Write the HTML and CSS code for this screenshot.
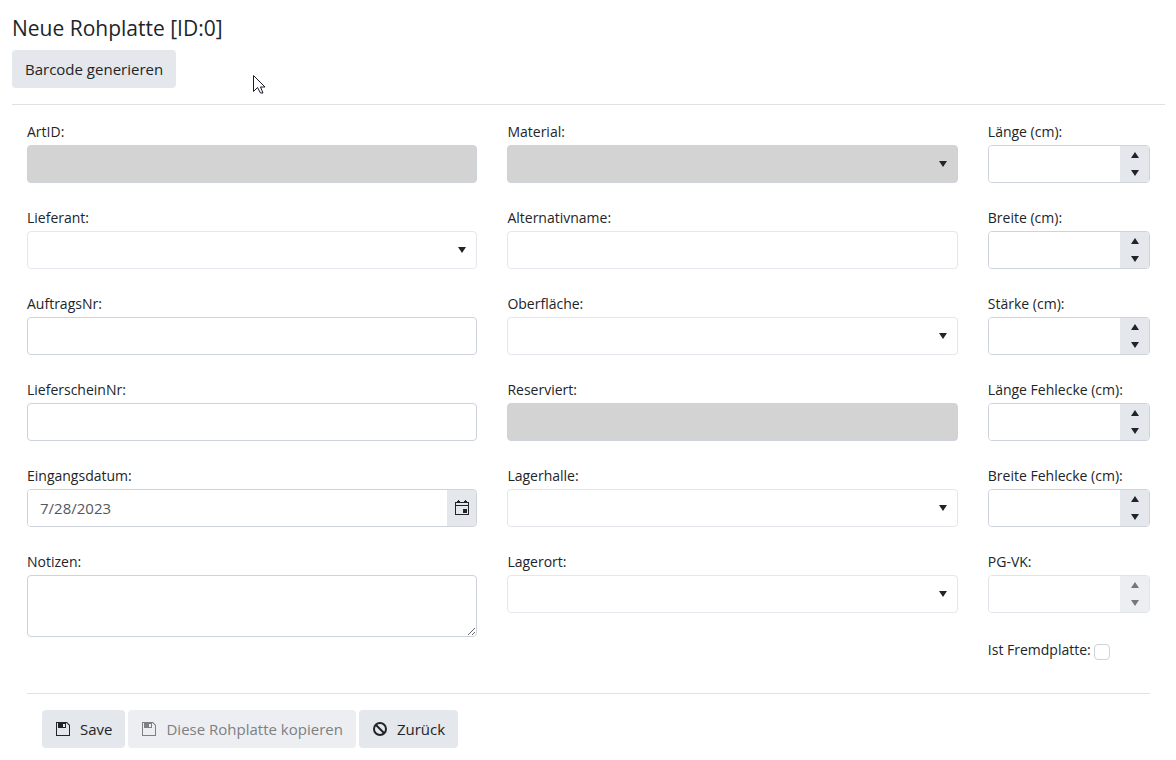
FILE: index.html
```html
<!DOCTYPE html>
<html lang="de">
<head>
<meta charset="utf-8">
<title>Neue Rohplatte</title>
<link rel="stylesheet" href="styles.css">
</head>
<body>
<svg class="symbols" aria-hidden="true">
  <symbol id="down" viewBox="0 0 8 6"><path d="M0 0h8L4 6z"/></symbol>
  <symbol id="up" viewBox="0 0 8 6"><path d="M0 6h8L4 0z"/></symbol>
  <symbol id="save" viewBox="0 0 16 16"><path fill-rule="evenodd" d="M1 1h11l3 3v11H1zM2 2v12h12V4.500L11.500 2H11v5H3V2zM8 3v3h2V3z"/></symbol>
  <symbol id="cancel" viewBox="0 0 16 16"><circle cx="8" cy="8" r="6" fill="none" stroke="currentColor" stroke-width="2"/><path d="M4 4l8 8" stroke="currentColor" stroke-width="2"/></symbol>
  <symbol id="calendar" viewBox="0 0 16 16"><path fill-rule="evenodd" d="M1 2h3V0h1v2h6V0h1v2h3v13H1zM2 3v2h12V3zM2 6v8h12V6zM9 9h4v4H9z"/><path d="M3 1h3v1H3zM10 1h3v1h-3z"/></symbol>
</svg>
<main class="page">
  <header class="page-header">
    <h1 class="title">Neue Rohplatte [ID:0]</h1>
    <button class="button" type="button">Barcode generieren</button>
  </header>
  <form class="form">
    <div class="columns">
      <div class="column">
        <div class="field"><label for="artid">ArtID:</label><input class="control filled" id="artid" type="text" disabled></div>
        <div class="field"><label for="lieferant">Lieferant:</label>
          <div class="picker"><select class="control light" id="lieferant"><option></option></select><svg class="arrow"><use href="#down"/></svg></div></div>
        <div class="field"><label for="auftrag">AuftragsNr:</label><input class="control" id="auftrag" type="text"></div>
        <div class="field"><label for="lieferschein">LieferscheinNr:</label><input class="control" id="lieferschein" type="text"></div>
        <div class="field"><label for="datum">Eingangsdatum:</label>
          <div class="group"><input class="group-input" id="datum" type="text" value="7/28/2023"><button class="calendar" type="button" aria-label="Kalender"><svg class="icon"><use href="#calendar"/></svg></button></div></div>
        <div class="field"><label for="notizen">Notizen:</label><textarea class="control notes" id="notizen"></textarea></div>
      </div>
      <div class="column">
        <div class="field"><label for="material">Material:</label>
          <div class="picker"><select class="control filled light" id="material" disabled><option></option></select><svg class="arrow"><use href="#down"/></svg></div></div>
        <div class="field"><label for="alternativ">Alternativname:</label><input class="control light" id="alternativ" type="text"></div>
        <div class="field"><label for="oberflaeche">Oberfläche:</label>
          <div class="picker"><select class="control light" id="oberflaeche"><option></option></select><svg class="arrow"><use href="#down"/></svg></div></div>
        <div class="field"><label for="reserviert">Reserviert:</label><input class="control filled" id="reserviert" type="text" disabled></div>
        <div class="field"><label for="halle">Lagerhalle:</label>
          <div class="picker"><select class="control light" id="halle"><option></option></select><svg class="arrow"><use href="#down"/></svg></div></div>
        <div class="field"><label for="ort">Lagerort:</label>
          <div class="picker"><select class="control light" id="ort"><option></option></select><svg class="arrow"><use href="#down"/></svg></div></div>
      </div>
      <div class="column">
        <div class="field"><label for="laenge">Länge (cm):</label>
          <div class="group"><input class="group-input" id="laenge" type="text" inputmode="decimal"><span class="spinner"><button type="button" aria-label="Erhöhen"><svg><use href="#up"/></svg></button><button type="button" aria-label="Verringern"><svg><use href="#down"/></svg></button></span></div></div>
        <div class="field"><label for="breite">Breite (cm):</label>
          <div class="group"><input class="group-input" id="breite" type="text" inputmode="decimal"><span class="spinner"><button type="button" aria-label="Erhöhen"><svg><use href="#up"/></svg></button><button type="button" aria-label="Verringern"><svg><use href="#down"/></svg></button></span></div></div>
        <div class="field"><label for="staerke">Stärke (cm):</label>
          <div class="group"><input class="group-input" id="staerke" type="text" inputmode="decimal"><span class="spinner"><button type="button" aria-label="Erhöhen"><svg><use href="#up"/></svg></button><button type="button" aria-label="Verringern"><svg><use href="#down"/></svg></button></span></div></div>
        <div class="field"><label for="laenge-ecke">Länge Fehlecke (cm):</label>
          <div class="group"><input class="group-input" id="laenge-ecke" type="text" inputmode="decimal"><span class="spinner"><button type="button" aria-label="Erhöhen"><svg><use href="#up"/></svg></button><button type="button" aria-label="Verringern"><svg><use href="#down"/></svg></button></span></div></div>
        <div class="field"><label for="breite-ecke">Breite Fehlecke (cm):</label>
          <div class="group"><input class="group-input" id="breite-ecke" type="text" inputmode="decimal"><span class="spinner"><button type="button" aria-label="Erhöhen"><svg><use href="#up"/></svg></button><button type="button" aria-label="Verringern"><svg><use href="#down"/></svg></button></span></div></div>
        <div class="field"><label for="pgvk">PG-VK:</label>
          <div class="group inactive"><input class="group-input" id="pgvk" type="text" disabled><span class="spinner"><button type="button" aria-label="Erhöhen" disabled><svg><use href="#up"/></svg></button><button type="button" aria-label="Verringern" disabled><svg><use href="#down"/></svg></button></span></div></div>
        <div class="check-field"><label for="fremd">Ist Fremdplatte:</label><input class="check" id="fremd" type="checkbox"></div>
      </div>
    </div>
    <footer class="actions">
      <button class="button" type="submit"><svg class="icon"><use href="#save"/></svg>Save</button>
      <button class="button" type="button" disabled><svg class="icon"><use href="#save"/></svg>Diese Rohplatte kopieren</button>
      <button class="button" type="button"><svg class="icon"><use href="#cancel"/></svg>Zurück</button>
    </footer>
  </form>
</main>
<svg class="pointer" viewBox="0 0 13 20" aria-hidden="true"><path d="M.5.5v16l4-4 3 5.500h2.500L7.500 12h4.500z" fill="#fff" stroke="#1b1b2b"/></svg>
</body>
</html>
```
FILE: styles.css
```css
* { box-sizing: border-box; }
body {
  margin: 0;
  background: #fff;
  color: #212529;
  font: 14px/18px "Open Sans", "Noto Sans", sans-serif;
}
button, input, select, textarea { font: inherit; color: inherit; margin: 0; }
svg { fill: currentColor; }
.symbols { display: none; }
.page { padding: 14px 11px 12px 12px; }
.page-header { padding-bottom: 16px; border-bottom: 1px solid #e0e1e2; }
.title { margin: 0 0 8px; font-size: 21px; line-height: 28px; font-weight: 400; }
.button {
  display: inline-flex;
  align-items: center;
  gap: 9px;
  height: 38px;
  padding: 0 13px;
  border: 0;
  border-radius: 4px;
  background: #e4e7eb;
  font-size: 15px;
  white-space: nowrap;
}
.button:disabled { background: #edeef2; color: #7d7f83; }
.icon { width: 16px; height: 16px; flex: none; }
.columns {
  display: grid;
  grid-template-columns: minmax(0, 5fr) minmax(0, 5fr) minmax(0, 2fr);
  padding: 18px 0 32px;
}
.column { display: flex; flex-direction: column; gap: 26px; padding: 0 15px; }
.field { display: flex; flex-direction: column; gap: 4px; }
.field label, .check-field label { white-space: nowrap; }
.control {
  display: block;
  width: 100%;
  height: 38px;
  padding: 0 12px;
  border: 1px solid #ced2da;
  border-radius: 4px;
  background: #fff;
  appearance: none;
}
.light { border-color: #e4e7eb; }
.filled { background: #d3d3d3; border-color: #ced2da; opacity: 1; }
.notes { height: 62px; padding: 8px 12px; resize: vertical; }
.picker { position: relative; }
.arrow { position: absolute; right: 11px; top: 16px; width: 8px; height: 6px; pointer-events: none; }
.group {
  display: flex;
  height: 38px;
  border: 1px solid #ced2da;
  border-radius: 4px;
  overflow: hidden;
}
.group-input {
  flex: 1;
  min-width: 0;
  padding: 0 12px;
  border: 0;
  background: #fff;
  color: #55585c;
  font-size: 15px;
}
.calendar, .spinner { width: 29px; flex: none; border: 0; background: #e4e7eb; }
.calendar { display: grid; place-items: center; padding: 0; }
.spinner { display: flex; flex-direction: column; }
.spinner button {
  display: grid;
  place-items: center;
  flex: 1;
  padding: 0;
  border: 0;
  background: transparent;
}
.spinner svg { width: 8px; height: 6px; }
.inactive { border-color: #e0e3e7; }
.inactive .spinner { background: #edeef2; color: #75777c; }
.check-field { display: flex; align-items: flex-end; gap: 3px; height: 22px; padding-bottom: 1px; }
.check-field label { padding-bottom: 1px; }
.check {
  width: 16px;
  height: 16px;
  border: 1px solid #ced2da;
  border-radius: 4px;
  background: #fff;
  appearance: none;
}
.actions {
  display: flex;
  gap: 3px;
  margin: 0 15px;
  padding: 16px 15px 0;
  border-top: 1px solid #e0e1e2;
}
.pointer { position: absolute; left: 253px; top: 75px; width: 13px; height: 20px; }
```
